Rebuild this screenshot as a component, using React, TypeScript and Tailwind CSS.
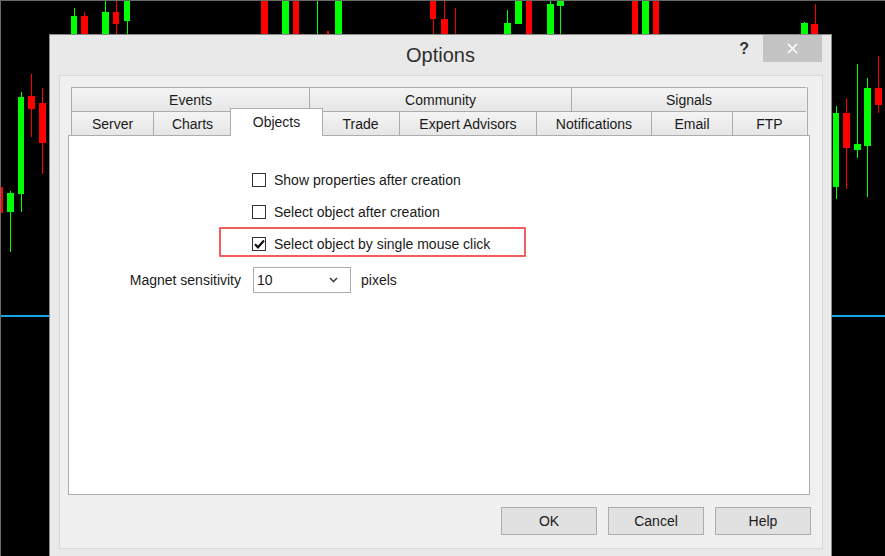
import React from "react";

type Candle = { x: number; w: number; t: number; b: number; c: "g" | "r"; wx?: number; wt?: number; wb?: number };

const candles: Candle[] = [
  { x: 71, w: 6, t: 16, b: 60, c: "g", wx: 74, wt: 8, wb: 60 },
  { x: 81, w: 7, t: 16, b: 60, c: "r", wx: 84, wt: 12, wb: 60 },
  { x: 102, w: 7, t: 12, b: 60, c: "g", wx: 105, wt: 0, wb: 60 },
  { x: 113, w: 6, t: 12, b: 24, c: "r", wx: 116, wt: 0, wb: 60 },
  { x: 124, w: 6, t: 0, b: 21, c: "g", wx: 127, wt: 0, wb: 60 },
  { x: 261, w: 7, t: 0, b: 60, c: "r" },
  { x: 282, w: 7, t: 0, b: 60, c: "g" },
  { x: 293, w: 6, t: 0, b: 60, c: "r" },
  { x: 317, w: 1, t: 0, b: 60, c: "g" },
  { x: 327, w: 2, t: 31, b: 60, c: "r" },
  { x: 335, w: 7, t: 0, b: 60, c: "g" },
  { x: 430, w: 6, t: 0, b: 19, c: "r", wx: 433, wt: 0, wb: 60 },
  { x: 441, w: 7, t: 19, b: 60, c: "r", wx: 444, wt: 0, wb: 60 },
  { x: 455, w: 1, t: 8, b: 60, c: "r" },
  { x: 504, w: 7, t: 23, b: 60, c: "g", wx: 507, wt: 10, wb: 60 },
  { x: 515, w: 7, t: 0, b: 24, c: "g" },
  { x: 526, w: 6, t: 0, b: 60, c: "r" },
  { x: 547, w: 7, t: 4, b: 60, c: "g", wx: 550, wt: 0, wb: 60 },
  { x: 557, w: 7, t: 0, b: 6, c: "g", wx: 560, wt: 0, wb: 60 },
  { x: 632, w: 6, t: 0, b: 60, c: "r" },
  { x: 642, w: 7, t: 0, b: 60, c: "g" },
  { x: 653, w: 6, t: 0, b: 60, c: "r" },
  { x: 801, w: 7, t: 23, b: 60, c: "g", wx: 804, wt: 22, wb: 60 },
  { x: 811, w: 7, t: 24, b: 60, c: "r", wx: 815, wt: 4, wb: 60 },
  // right side
  { x: 833, w: 6, t: 113, b: 187, c: "g", wx: 836, wt: 106, wb: 199 },
  { x: 843, w: 7, t: 113, b: 148, c: "r", wx: 846, wt: 98, wb: 189 },
  { x: 854, w: 7, t: 144, b: 150, c: "g", wx: 857, wt: 64, wb: 158 },
  { x: 864, w: 7, t: 88, b: 146, c: "g", wx: 867, wt: 78, wb: 197 },
  { x: 875, w: 7, t: 88, b: 105, c: "r", wx: 878, wt: 56, wb: 113 },
  // left side
  { x: 18, w: 6, t: 97, b: 194, c: "g", wx: 21, wt: 92, wb: 212 },
  { x: 28, w: 7, t: 96, b: 109, c: "r", wx: 31, wt: 74, wb: 137 },
  { x: 39, w: 7, t: 103, b: 143, c: "r", wx: 42, wt: 88, wb: 174 },
  { x: 7, w: 7, t: 193, b: 212, c: "g", wx: 10, wt: 191, wb: 252 },
  { x: 1, w: 2, t: 187, b: 213, c: "r" },
];

function Chart() {
  return (
    <svg className="absolute inset-0" width={885} height={556} viewBox="0 0 885 556">
      <rect x={0} y={0} width={885} height={556} fill="#000" />
      {candles.map((k, i) => {
        const col = k.c === "g" ? "#00ff00" : "#ff0000";
        return (
          <g key={i}>
            {k.wx !== undefined && (
              <rect x={k.wx} y={k.wt} width={1} height={(k.wb ?? 0) - (k.wt ?? 0)} fill={col} />
            )}
            <rect x={k.x} y={k.t} width={k.w} height={k.b - k.t} fill={col} />
          </g>
        );
      })}
      <rect x={0} y={315} width={885} height={2} fill="#16a4e2" />
      <rect x={0} y={0} width={885} height={1} fill="#6a6a6a" />
      <rect x={0} y={0} width={1} height={556} fill="#6a6a6a" />
    </svg>
  );
}

function Tab({ label, w, selected }: { label: string; w: number; selected?: boolean }) {
  return (
    <div
      className="relative h-full shrink-0 border-l border-t border-[#acacac] bg-linear-to-b from-[#f4f4f4] to-[#e6e6e6] flex items-center justify-center pt-[2px] text-[14px] text-[#1a1a1a]"
      style={{ width: w }}
    >
      {selected ? (
        <div className="absolute -top-[4px] -left-[2px] -right-[2px] -bottom-[1px] z-10 bg-white border-l border-t border-r border-[#acacac] flex items-start justify-center pt-[3px]">
          {label}
        </div>
      ) : (
        label
      )}
    </div>
  );
}

function Checkbox({ checked, label }: { checked?: boolean; label: string }) {
  return (
    <div className="h-[32px] flex items-center pl-[183px]">
      <div className="w-[14px] h-[14px] border border-[#333] bg-white flex items-center justify-center">
        {checked && (
          <svg width="11" height="10" viewBox="0 0 11 10">
            <path d="M1 5.2 L4 8.3 L10 1.5" fill="none" stroke="#111" strokeWidth="2.2" />
          </svg>
        )}
      </div>
      <span className="ml-[8px] text-[14px] text-[#1a1a1a]">{label}</span>
    </div>
  );
}

function Button({ label }: { label: string }) {
  return (
    <div className="w-[96px] h-[28px] border border-[#adadad] bg-[#e1e1e1] flex items-center justify-center text-[14px] text-[#1a1a1a]">
      {label}
    </div>
  );
}

export default function App() {
  return (
    <div className="relative w-[885px] h-[556px] overflow-hidden bg-black font-['Liberation_Sans',Arial,sans-serif]">
      <Chart />
      <div className="absolute left-[49px] top-[34px] w-[783px] h-[523px] bg-[#e9e9e9] border border-[#8a8a8a] flex flex-col">
        {/* title bar */}
        <div className="h-[40px] shrink-0 grid grid-cols-[1fr_auto_1fr]">
          <div />
          <div className="flex items-center text-[20px] text-[#2e2e2e]">Options</div>
          <div className="flex justify-end items-start pr-[9px]">
            <div className="h-[27px] flex items-center pr-[14px] text-[16px] font-bold text-[#333]">?</div>
            <div className="w-[59px] h-[27px] bg-[#c4c4c4] flex items-center justify-center">
              <svg width="11" height="11" viewBox="0 0 11 11">
                <path d="M1 1 L10 10 M10 1 L1 10" stroke="#fff" strokeWidth="1.6" />
              </svg>
            </div>
          </div>
        </div>
        {/* client area */}
        <div className="ml-[9px] mr-[8px] mb-[7px] flex-1 border border-[#d9d9d9] bg-[#f0f0f0] flex flex-col pt-[11px] pl-[8px] pr-[12px]">
          <div className="flex flex-col pl-[3px] pr-[2px]">
            <div className="h-[24px] flex border-r border-[#acacac]">
              <Tab label="Events" w={238} />
              <Tab label="Community" w={262} />
              <Tab label="Signals" w={235} />
            </div>
            <div className="h-[24px] flex border-r border-[#acacac]">
              <Tab label="Server" w={82} />
              <Tab label="Charts" w={78} />
              <Tab label="Objects" w={90} selected />
              <Tab label="Trade" w={78} />
              <Tab label="Expert Advisors" w={137} />
              <Tab label="Notifications" w={115} />
              <Tab label="Email" w={81} />
              <Tab label="FTP" w={74} />
            </div>
          </div>
          <div className="relative h-[360px] border border-[#adadad] bg-white flex flex-col pt-[28px]">
            <Checkbox label="Show properties after creation" />
            <Checkbox label="Select object after creation" />
            <Checkbox label="Select object by single mouse click" checked />
            <div className="mt-[7px] h-[26px] flex items-center">
              <div className="w-[172px] text-right text-[14px] text-[#1a1a1a]">Magnet sensitivity</div>
              <div className="ml-[12px] w-[98px] h-[26px] border border-[#ababab] bg-white flex items-center justify-between pl-[3px] pr-[12px] text-[14px] text-[#1a1a1a]">
                <span>10</span>
                <svg width="9" height="6" viewBox="0 0 9 6">
                  <path d="M1 1 L4.5 4.5 L8 1" fill="none" stroke="#444" strokeWidth="1.6" />
                </svg>
              </div>
              <span className="ml-[10px] text-[14px] text-[#1a1a1a]">pixels</span>
            </div>
            <div className="absolute left-[150px] top-[91px] w-[307px] h-[30px] border-2 border-[#ef5f5f] rounded-[1px]" />
          </div>
          <div className="flex justify-end gap-[11px] mt-[12px] -mr-[1px]">
            <Button label="OK" />
            <Button label="Cancel" />
            <Button label="Help" />
          </div>
        </div>
      </div>
    </div>
  );
}
